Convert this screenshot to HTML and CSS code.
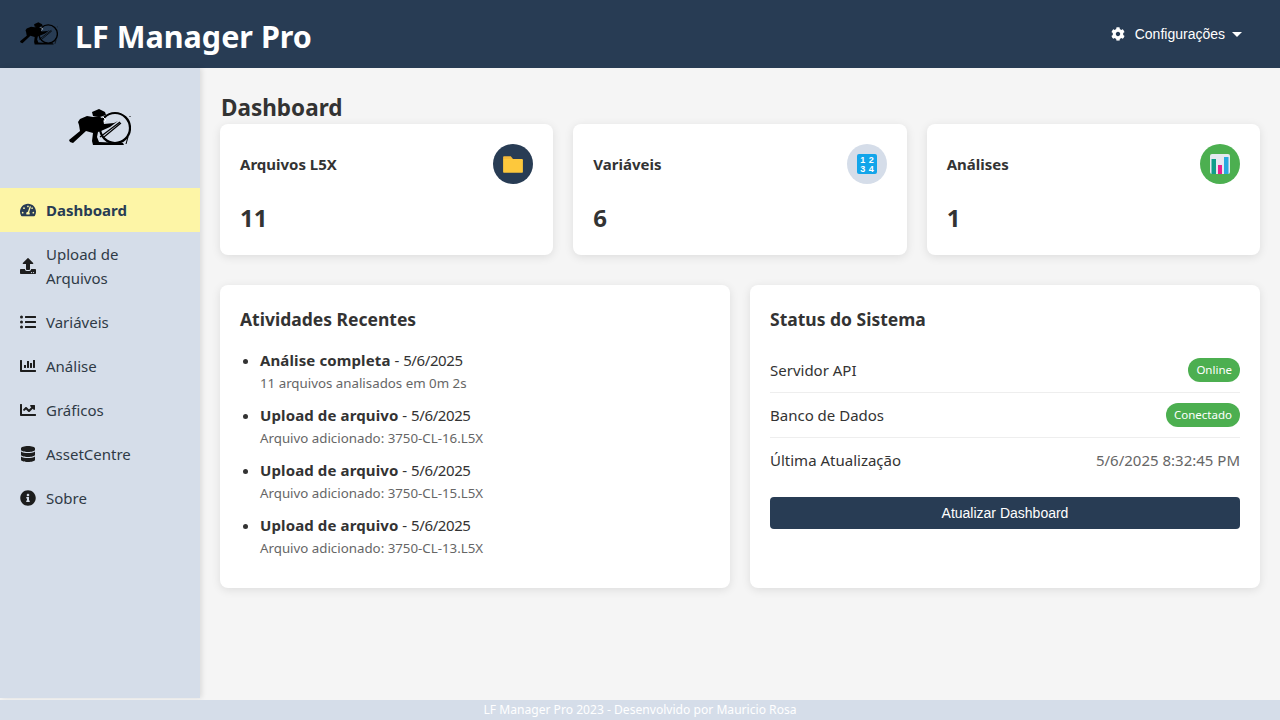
FILE: index.html
```html
<!DOCTYPE html>
<html lang="pt-BR">
<head>
  <meta charset="UTF-8" />
  <title>LF Manager Pro</title>
  <link rel="stylesheet" href="styles.css">
</head>
<body>
  <svg class="sprites" width="0" height="0">
    <symbol id="logo" viewBox="9 8 62 42">
      <path d="M32 13l7-3 6 3 1 3-6 2-7-1z" fill="#000"/>
      <path d="M20 20l7-3 6 1 6-1 4 3 1 5 10-1 4-2-8 6-9 4-3 1-1 5 2 5 24 1 1 2H33l-1-4 1-8-7-2-13 12-3-1-1-2 11-9-1-6-1-3z" fill="#000"/>
      <circle cx="55" cy="29" r="15" fill="none" stroke="#000" stroke-width="2.2"/>
      <path d="M40 38L60 23M44 38l17-14" stroke="#000" stroke-width="1.2"/>
      <path d="M43 18l3 3-2 2" fill="none" stroke="#fff" stroke-width="1"/>
      <path d="M70 17v1M68 38l-2 7" stroke="#000" stroke-width="1" fill="none"/>
    </symbol>
    <symbol id="i-cog" viewBox="0 0 512 512"><path d="M487.4 315.7l-42.6-24.6c4.3-23.2 4.3-47 0-70.2l42.6-24.6c4.9-2.8 7.1-8.6 5.5-14-11.1-35.6-30-67.8-54.7-94.6-3.8-4.1-10-5.1-14.8-2.3L380.8 110c-17.9-15.4-38.5-27.3-60.8-35.1V25.8c0-5.6-3.9-10.5-9.4-11.7-36.7-8.2-74.3-7.8-109.2 0-5.5 1.2-9.4 6.1-9.4 11.7V75c-22.2 7.9-42.8 19.8-60.8 35.1L88.7 85.5c-4.9-2.8-11-1.9-14.8 2.3-24.7 26.7-43.6 58.9-54.7 94.6-1.7 5.4.6 11.2 5.5 14L67.3 221c-4.3 23.2-4.3 47 0 70.2l-42.6 24.6c-4.9 2.8-7.1 8.6-5.5 14 11.1 35.6 30 67.8 54.7 94.6 3.8 4.1 10 5.1 14.8 2.3l42.6-24.6c17.9 15.4 38.5 27.3 60.8 35.1v49.2c0 5.6 3.9 10.5 9.4 11.7 36.7 8.2 74.3 7.8 109.2 0 5.5-1.2 9.4-6.1 9.4-11.7v-49.2c22.2-7.9 42.8-19.8 60.8-35.1l42.6 24.6c4.9 2.8 11 1.9 14.8-2.3 24.7-26.7 43.6-58.9 54.7-94.6 1.5-5.5-.7-11.3-5.6-14.1zM256 336c-44.1 0-80-35.9-80-80s35.9-80 80-80 80 35.9 80 80-35.9 80-80 80z"/></symbol>
    <symbol id="i-gauge" viewBox="0 0 576 512"><path d="M288 32C128.94 32 0 160.94 0 320c0 52.8 14.25 102.26 39.06 144.8 5.61 9.62 16.3 15.2 27.44 15.2h443c11.14 0 21.83-5.58 27.44-15.2C561.75 422.26 576 372.8 576 320c0-159.06-128.94-288-288-288zm0 64c14.71 0 26.58 10.13 30.32 23.65-1.11 2.26-2.64 4.23-3.45 6.67l-9.22 27.67c-5.13 3.49-10.97 6.01-17.64 6.01-17.67 0-32-14.33-32-32S270.33 96 288 96zM96 384c-17.67 0-32-14.33-32-32s14.33-32 32-32 32 14.33 32 32-14.33 32-32 32zm48-160c-17.67 0-32-14.33-32-32s14.33-32 32-32 32 14.33 32 32-14.33 32-32 32zm246.77-72.41l-61.33 184C343.13 347.33 352 364.54 352 384c0 11.72-3.38 22.55-8.88 32H232.88c-5.5-9.45-8.88-20.28-8.88-32 0-33.94 26.5-61.43 59.9-63.59l61.34-184.01c4.17-12.56 17.73-19.45 30.36-15.17 12.57 4.19 19.35 17.79 15.17 30.36zm14.66 57.2l15.52-46.55c3.47-1.29 7.13-2.23 11.05-2.23 17.67 0 32 14.33 32 32s-14.33 32-32 32c-11.38-.01-20.89-6.28-26.57-15.22zM480 384c-17.67 0-32-14.33-32-32s14.33-32 32-32 32 14.33 32 32-14.33 32-32 32z"/></symbol>
    <symbol id="i-upload" viewBox="0 0 512 512"><path d="M296 384h-80c-13.3 0-24-10.7-24-24V192h-87.7c-17.8 0-26.7-21.5-14.1-34.1L242.3 5.7c7.5-7.5 19.8-7.5 27.3 0l152.2 152.2c12.6 12.6 3.7 34.1-14.1 34.1H320v168c0 13.3-10.7 24-24 24zm216-8v112c0 13.3-10.7 24-24 24H24c-13.3 0-24-10.7-24-24V376c0-13.3 10.7-24 24-24h136v8c0 30.9 25.1 56 56 56h80c30.9 0 56-25.1 56-56v-8h136c13.3 0 24 10.7 24 24zm-124 88c0-11-9-20-20-20s-20 9-20 20 9 20 20 20 20-9 20-20zm64 0c0-11-9-20-20-20s-20 9-20 20 9 20 20 20 20-9 20-20z"/></symbol>
    <symbol id="i-list" viewBox="0 0 512 512"><path d="M48 48a48 48 0 1 0 48 48 48 48 0 0 0-48-48zm0 160a48 48 0 1 0 48 48 48 48 0 0 0-48-48zm0 160a48 48 0 1 0 48 48 48 48 0 0 0-48-48zm448 16H176a16 16 0 0 0-16 16v32a16 16 0 0 0 16 16h320a16 16 0 0 0 16-16v-32a16 16 0 0 0-16-16zm0-320H176a16 16 0 0 0-16 16v32a16 16 0 0 0 16 16h320a16 16 0 0 0 16-16V80a16 16 0 0 0-16-16zm0 160H176a16 16 0 0 0-16 16v32a16 16 0 0 0 16 16h320a16 16 0 0 0 16-16v-32a16 16 0 0 0-16-16z"/></symbol>
    <symbol id="i-bar" viewBox="0 0 512 512"><path d="M332.8 320h38.4c6.4 0 12.8-6.4 12.8-12.8V172.8c0-6.4-6.4-12.8-12.8-12.8h-38.4c-6.4 0-12.8 6.4-12.8 12.8v134.4c0 6.4 6.4 12.8 12.8 12.8zm96 0h38.4c6.4 0 12.8-6.4 12.8-12.8V76.8c0-6.4-6.4-12.8-12.8-12.8h-38.4c-6.4 0-12.8 6.4-12.8 12.8v230.4c0 6.4 6.4 12.8 12.8 12.8zm-288 0h38.4c6.4 0 12.8-6.4 12.8-12.8v-70.4c0-6.4-6.4-12.8-12.8-12.8h-38.4c-6.4 0-12.8 6.4-12.8 12.8v70.4c0 6.4 6.4 12.8 12.8 12.8zm96 0h38.4c6.4 0 12.8-6.4 12.8-12.8V108.8c0-6.4-6.4-12.8-12.8-12.8h-38.4c-6.4 0-12.8 6.4-12.8 12.8v198.4c0 6.4 6.4 12.8 12.8 12.8zM496 384H64V80c0-8.84-7.16-16-16-16H16C7.16 64 0 71.16 0 80v336c0 17.67 14.33 32 32 32h464c8.84 0 16-7.16 16-16v-32c0-8.84-7.16-16-16-16z"/></symbol>
    <symbol id="i-line" viewBox="0 0 512 512"><path d="M496 384H64V80c0-8.84-7.16-16-16-16H16C7.16 64 0 71.16 0 80v336c0 17.67 14.33 32 32 32h464c8.84 0 16-7.16 16-16v-32c0-8.84-7.16-16-16-16zM464 96H345.94c-21.38 0-32.09 25.85-16.97 40.97l32.4 32.4L288 242.75l-73.37-73.37c-12.5-12.5-32.76-12.5-45.25 0l-68.69 68.69c-6.25 6.25-6.25 16.38 0 22.63l22.62 22.62c6.25 6.25 16.38 6.25 22.63 0L192 237.25l73.37 73.37c12.5 12.5 32.76 12.5 45.25 0l96-96 32.4 32.4c15.12 15.12 40.97 4.41 40.97-16.97V112c.01-8.84-7.15-16-15.99-16z"/></symbol>
    <symbol id="i-db" viewBox="0 0 448 512"><path d="M448 73.143v45.714C448 159.143 347.667 192 224 192S0 159.143 0 118.857V73.143C0 32.857 100.333 0 224 0s224 32.857 224 73.143zM448 176v102.857C448 319.143 347.667 352 224 352S0 319.143 0 278.857V176c48.125 33.143 136.208 48.572 224 48.572S399.874 209.143 448 176zm0 160v102.857C448 479.143 347.667 512 224 512S0 479.143 0 438.857V336c48.125 33.143 136.208 48.572 224 48.572S399.874 369.143 448 336z"/></symbol>
    <symbol id="i-info" viewBox="0 0 512 512"><path d="M256 8C119.043 8 8 119.083 8 256c0 136.997 111.043 248 248 248s248-111.003 248-248C504 119.083 392.957 8 256 8zm0 110c23.196 0 42 18.804 42 42s-18.804 42-42 42-42-18.804-42-42 18.804-42 42-42zm56 254c0 6.627-5.373 12-12 12h-88c-6.627 0-12-5.373-12-12v-24c0-6.627 5.373-12 12-12h12v-64h-12c-6.627 0-12-5.373-12-12v-24c0-6.627 5.373-12 12-12h64c6.627 0 12 5.373 12 12v100h12c6.627 0 12 5.373 12 12v24z"/></symbol>
  </svg>

  <header class="topbar">
    <div class="brand">
      <svg class="brand-logo"><use href="#logo"/></svg>
      <h1>LF Manager Pro</h1>
    </div>
    <button class="settings">
      <svg class="settings-icon"><use href="#i-cog"/></svg>
      Configurações
      <span class="caret"></span>
    </button>
  </header>

  <div class="layout">
    <aside class="sidebar">
      <div class="sidebar-logo"><svg><use href="#logo"/></svg></div>
      <nav class="nav">
        <a class="nav-item active"><svg class="nav-icon"><use href="#i-gauge"/></svg><span>Dashboard</span></a>
        <a class="nav-item"><svg class="nav-icon"><use href="#i-upload"/></svg><span>Upload de Arquivos</span></a>
        <a class="nav-item"><svg class="nav-icon"><use href="#i-list"/></svg><span>Variáveis</span></a>
        <a class="nav-item"><svg class="nav-icon"><use href="#i-bar"/></svg><span>Análise</span></a>
        <a class="nav-item"><svg class="nav-icon"><use href="#i-line"/></svg><span>Gráficos</span></a>
        <a class="nav-item"><svg class="nav-icon"><use href="#i-db"/></svg><span>AssetCentre</span></a>
        <a class="nav-item"><svg class="nav-icon"><use href="#i-info"/></svg><span>Sobre</span></a>
      </nav>
    </aside>

    <main class="content">
      <h2 class="page-title">Dashboard</h2>

      <section class="stats">
        <div class="card stat">
          <div class="stat-head">
            <h3>Arquivos L5X</h3>
            <div class="stat-icon navy">
              <svg viewBox="0 0 20 20" width="22" height="22">
                <path d="M1 4c0-.6.4-1 1-1h6l2 2.5H1z" fill="#f5b93a"/>
                <path d="M1 5.5h17c.6 0 1 .4 1 1V17c0 .6-.4 1-1 1H2c-.6 0-1-.4-1-1z" fill="#fdc83c"/>
              </svg>
            </div>
          </div>
          <div class="stat-value">11</div>
        </div>
        <div class="card stat">
          <div class="stat-head">
            <h3>Variáveis</h3>
            <div class="stat-icon grey">
              <svg viewBox="0 0 20 20" width="20" height="20">
                <rect width="20" height="20" rx="2" fill="#12a5ea"/>
                <text x="5.7" y="9.2" class="keycap">1</text>
                <text x="14.3" y="9.2" class="keycap">2</text>
                <text x="5.7" y="17.6" class="keycap">3</text>
                <text x="14.3" y="17.6" class="keycap">4</text>
              </svg>
            </div>
          </div>
          <div class="stat-value">6</div>
        </div>
        <div class="card stat">
          <div class="stat-head">
            <h3>Análises</h3>
            <div class="stat-icon green">
              <svg viewBox="0 0 20 20" width="20" height="20">
                <rect width="20" height="20" rx="2" fill="#e6e8f0"/>
                <rect x="1.5" y="5" width="4.5" height="15" fill="#0f9d8a"/>
                <rect x="8" y="11" width="4" height="9" fill="#e91e8c"/>
                <rect x="14" y="3" width="4.5" height="17" fill="#29a9e0"/>
              </svg>
            </div>
          </div>
          <div class="stat-value">1</div>
        </div>
      </section>

      <section class="panels">
        <div class="card panel">
          <h3 class="panel-title">Atividades Recentes</h3>
          <ul class="activity">
            <li><strong>Análise completa</strong> - <span class="when">5/6/2025</span><small>11 arquivos analisados em 0m 2s</small></li>
            <li><strong>Upload de arquivo</strong> - <span class="when">5/6/2025</span><small>Arquivo adicionado: 3750-CL-16.L5X</small></li>
            <li><strong>Upload de arquivo</strong> - <span class="when">5/6/2025</span><small>Arquivo adicionado: 3750-CL-15.L5X</small></li>
            <li><strong>Upload de arquivo</strong> - <span class="when">5/6/2025</span><small>Arquivo adicionado: 3750-CL-13.L5X</small></li>
          </ul>
        </div>
        <div class="card panel">
          <h3 class="panel-title">Status do Sistema</h3>
          <div class="status-row"><span>Servidor API</span><span class="badge">Online</span></div>
          <div class="status-row"><span>Banco de Dados</span><span class="badge">Conectado</span></div>
          <div class="status-row"><span>Última Atualização</span><span class="muted">5/6/2025 8:32:45 PM</span></div>
          <button class="refresh">Atualizar Dashboard</button>
        </div>
      </section>
    </main>
  </div>

  <footer class="footer">LF Manager Pro 2023 - Desenvolvido por Mauricio Rosa</footer>
</body>
</html>
```
FILE: styles.css
```css
* {
  box-sizing: border-box;
}
body {
  margin: 0;
  height: 100vh;
  display: flex;
  flex-direction: column;
  overflow: hidden;
  font-family: "Noto Sans", sans-serif;
  font-size: 15px;
  line-height: 24px;
  color: #333;
  background: #f5f5f5;
}
.sprites {
  position: absolute;
}

.topbar {
  height: 68px;
  flex: none;
  display: flex;
  align-items: center;
  justify-content: space-between;
  padding: 0 20px;
  background: #283c54;
  color: #fff;
}
.brand {
  display: flex;
  align-items: center;
}
.brand-logo {
  width: 38px;
  height: 26px;
  margin-right: 17px;
}
.brand h1 {
  margin: 0;
  padding-top: 4px;
  font-size: 30.5px;
  line-height: 40px;
  font-weight: 700;
}
.settings {
  display: flex;
  align-items: center;
  padding: 0 18px 0 0;
  border: none;
  background: none;
  color: #fff;
  font-family: "Liberation Sans", sans-serif;
  font-size: 14px;
}
.settings-icon {
  width: 14px;
  height: 14px;
  margin-right: 10px;
  fill: #fff;
}
.caret {
  margin-left: 7px;
  border-top: 5px solid #fff;
  border-left: 5px solid transparent;
  border-right: 5px solid transparent;
}

.layout {
  flex: 1;
  display: flex;
  min-height: 0;
}
.sidebar {
  width: 200px;
  flex: none;
  background: #d5dde9;
  box-shadow: 2px 0 5px rgba(0, 0, 0, 0.1);
}
.sidebar-logo {
  height: 120px;
  display: flex;
  align-items: center;
  justify-content: center;
}
.sidebar-logo svg {
  width: 62px;
  height: 42px;
}
.nav-item {
  display: flex;
  align-items: center;
  padding: 10px 20px;
  color: #2f3a46;
}
.nav-item.active {
  background: #fdf5a6;
  color: #283c54;
  font-weight: 700;
}
.nav-icon {
  width: 16px;
  height: 16px;
  flex: none;
  margin-right: 10px;
  fill: #1d1d1d;
}
.active .nav-icon {
  fill: #283c54;
}

.content {
  flex: 1;
  padding: 20px;
  min-width: 0;
}
.page-title {
  margin: 0;
  height: 36px;
  padding-left: 1px;
  font-size: 22.5px;
  line-height: 40px;
  font-weight: 700;
}
.card {
  background: #fff;
  border-radius: 8px;
  box-shadow: 0 2px 10px rgba(0, 0, 0, 0.1);
  padding: 20px;
}
.stats {
  display: grid;
  grid-template-columns: repeat(3, 1fr);
  gap: 20px;
  margin-bottom: 30px;
}
.stat-head {
  display: flex;
  align-items: center;
  justify-content: space-between;
  margin-bottom: 16px;
}
.stat-head h3 {
  margin: 0;
  font-size: 15px;
  font-weight: 700;
}
.stat-icon {
  width: 40px;
  height: 40px;
  border-radius: 50%;
  display: flex;
  align-items: center;
  justify-content: center;
}
.navy { background: #283c54; }
.grey { background: #d5dde9; }
.green { background: #4caf50; }
.keycap {
  font-family: "Liberation Sans", sans-serif;
  font-size: 9px;
  font-weight: 700;
  fill: #fff;
  text-anchor: middle;
}
.stat-value {
  font-size: 24px;
  line-height: 35px;
  font-weight: 700;
}

.panels {
  display: grid;
  grid-template-columns: 1fr 1fr;
  gap: 20px;
}
.panel-title {
  margin: 0 0 15px;
  padding-top: 1px;
  font-size: 17.5px;
  line-height: 27px;
  font-weight: 700;
}
.activity {
  margin: 0;
  padding-left: 20px;
}
.activity li {
  margin-bottom: 10px;
}
.activity strong {
  letter-spacing: 0.12px;
}
.when {
  letter-spacing: -0.4px;
}
.activity small {
  display: block;
  padding-top: 2px;
  font-size: 13.3px;
  line-height: 19px;
  color: #666;
}
.status-row {
  display: flex;
  align-items: center;
  justify-content: space-between;
  padding: 10px 0;
  border-bottom: 1px solid #eee;
}
.status-row:last-of-type {
  border-bottom: none;
}
.badge {
  padding: 0 8px;
  border-radius: 12px;
  background: #4caf50;
  color: #fff;
  font-size: 11.5px;
}
.muted {
  color: #666;
}
.refresh {
  display: block;
  width: 100%;
  height: 32px;
  margin-top: 15px;
  border: none;
  border-radius: 4px;
  background: #283c54;
  color: #fff;
  font-family: "Liberation Sans", sans-serif;
  font-size: 14px;
}

.footer {
  height: 20px;
  flex: none;
  margin-top: 2px;
  background: #d5dde9;
  color: #fff;
  text-align: center;
  font-size: 12.1px;
  line-height: 20px;
}
```
